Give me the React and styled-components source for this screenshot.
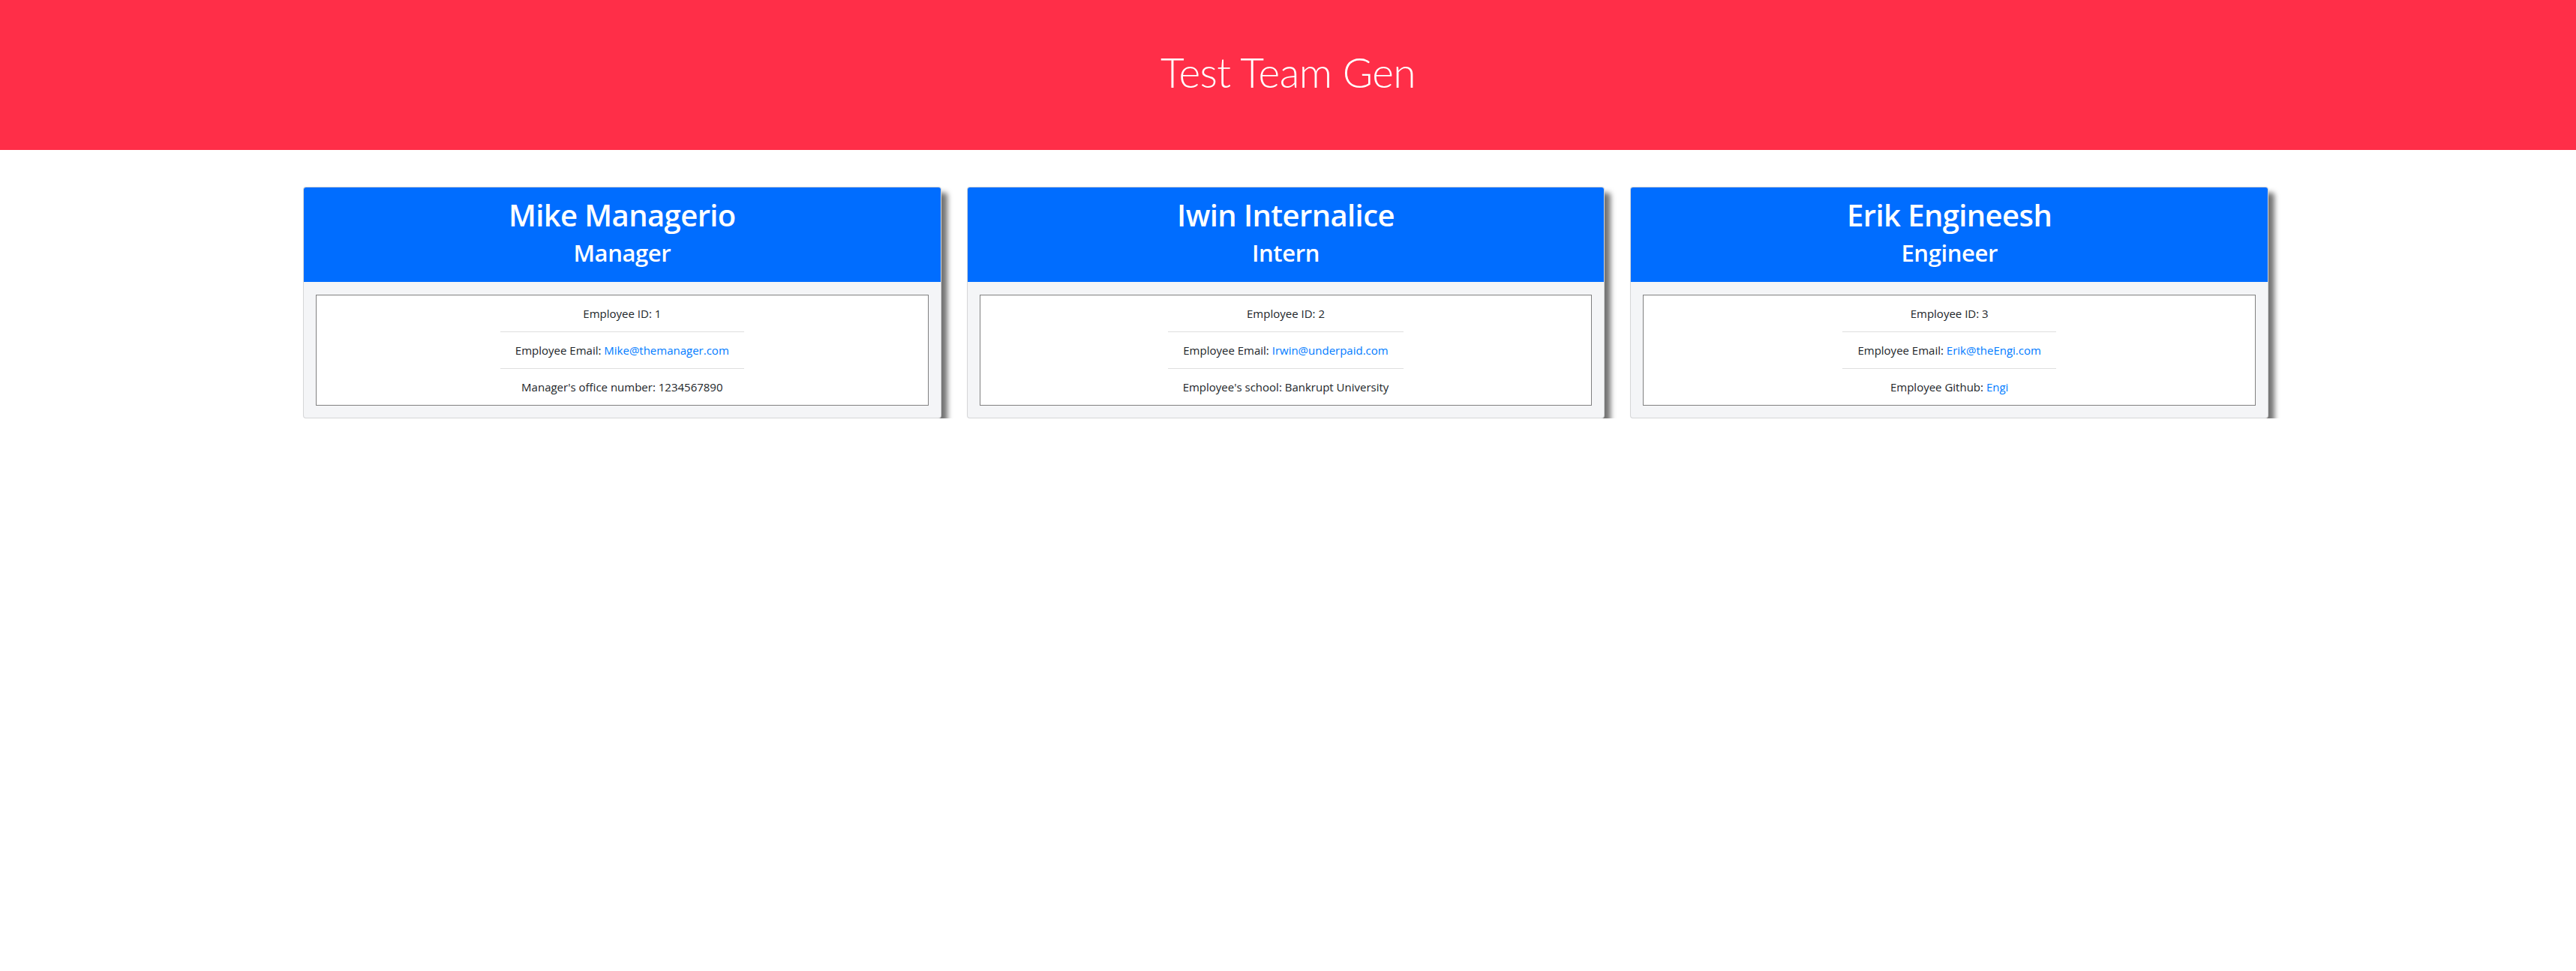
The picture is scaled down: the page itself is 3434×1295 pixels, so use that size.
import React from "react";
import styled, { createGlobalStyle } from "styled-components";

const Global = createGlobalStyle`
  html, body { margin: 0; padding: 0; background: #fff; }
  body {
    font-family: "Open Sans", "Noto Sans", "Liberation Sans", sans-serif;
    color: #212529;
    font-size: 16px;
  }
  * { box-sizing: border-box; }
`;

const Banner = styled.header`
  height: 200px;
  background: #ff2e48;
  display: flex;
  align-items: center;
  justify-content: center;
  padding-bottom: 8px;
`;

const Title = styled.h1`
  margin: 0;
  font-family: Lato, "Open Sans", sans-serif;
  font-size: 55px;
  font-weight: 300;
  line-height: 1.2;
  letter-spacing: -0.6px;
  color: #fff;
`;

const Team = styled.main`
  max-width: 2626px;
  margin: 0 auto;
  padding: 49px 6px 0 0;
  display: grid;
  grid-template-columns: repeat(3, 1fr);
  column-gap: 34px;
`;

const Card = styled.section`
  background: #f4f5f7;
  border: 1px solid rgba(0, 0, 0, 0.125);
  border-radius: 4px;
  box-shadow: 8px 8px 7px rgba(0, 0, 0, 0.55);
  overflow: hidden;
  display: flex;
  flex-direction: column;
`;

const CardHead = styled.div`
  background: #006dff;
  color: #fff;
  padding: 13px 20px 12px;
  text-align: center;
`;

const Name = styled.h2`
  margin: 0 0 8px;
  font-size: 40px;
  font-weight: 600;
  line-height: 1.2;
  letter-spacing: -0.6px;
`;

const Role = styled.h3`
  margin: 0 0 8px;
  font-size: 31px;
  font-weight: 600;
  line-height: 1.2;
  letter-spacing: -0.4px;
`;

const CardBody = styled.div`
  padding: 17px 16px 16px;
`;

const InfoBox = styled.div`
  background: #fff;
  border: 1px solid #808080;
  display: flex;
  justify-content: center;
`;

const InfoList = styled.ul`
  list-style: none;
  margin: 0;
  padding: 0;
  display: flex;
  flex-direction: column;
`;

const InfoItem = styled.li`
  padding: 12px 20px;
  line-height: 24px;
  font-size: 15px;
  text-align: center;
  & + & {
    border-top: 1px solid rgba(0, 0, 0, 0.125);
  }
`;

const Link = styled.a`
  color: #007bff;
  text-decoration: none;
`;

const team = [
  {
    name: "Mike Managerio",
    role: "Manager",
    id: 1,
    email: "Mike@themanager.com",
    extra: <>Manager's office number: 1234567890</>,
  },
  {
    name: "Iwin Internalice",
    role: "Intern",
    id: 2,
    email: "Irwin@underpaid.com",
    extra: <>Employee's school: Bankrupt University</>,
  },
  {
    name: "Erik Engineesh",
    role: "Engineer",
    id: 3,
    email: "Erik@theEngi.com",
    extra: (
      <>
        Employee Github: <Link href="#">Engi</Link>
      </>
    ),
  },
];

export default function App() {
  return (
    <>
      <Global />
      <Banner>
        <Title>Test Team Gen</Title>
      </Banner>
      <Team>
        {team.map((m) => (
          <Card key={m.id}>
            <CardHead>
              <Name>{m.name}</Name>
              <Role>{m.role}</Role>
            </CardHead>
            <CardBody>
              <InfoBox>
                <InfoList>
                  <InfoItem>Employee ID: {m.id}</InfoItem>
                  <InfoItem>
                    Employee Email: <Link href="#">{m.email}</Link>
                  </InfoItem>
                  <InfoItem>{m.extra}</InfoItem>
                </InfoList>
              </InfoBox>
            </CardBody>
          </Card>
        ))}
      </Team>
    </>
  );
}
